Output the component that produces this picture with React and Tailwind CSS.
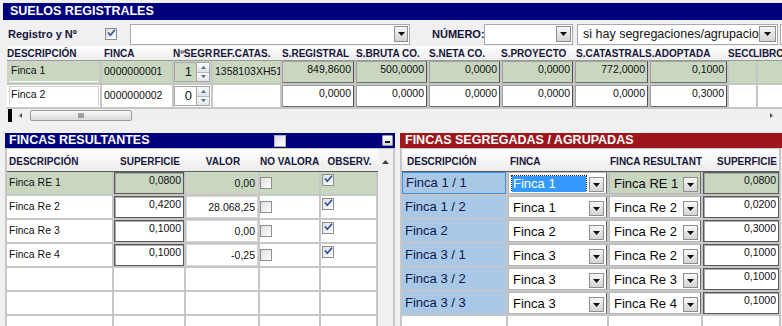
import React from 'react';

const G = 'bg-[#c9d7c1]';
const TITLE = 'text-[12.5px] font-bold text-white';

function Check({ on, className = '' }) {
  return (
    <span
      className={`flex h-[12px] w-[12px] shrink-0 items-start justify-center border border-[#8e8f8f] bg-gradient-to-br from-[#dcdcdc] to-white ${className}`}
    >
      {on && (
        <svg width="9" height="8" viewBox="0 0 9 8">
          <path d="M1 3.5l2.3 2.8L8 0.8" fill="none" stroke="#2b4f9e" strokeWidth="1.6" />
        </svg>
      )}
    </span>
  );
}

function Arrow() {
  return (
    <svg width="7" height="4" viewBox="0 0 7 4">
      <path d="M0 0h7L3.5 4z" fill="#111" />
    </svg>
  );
}

function DropBtn({ className = '' }) {
  return (
    <span
      className={`flex shrink-0 items-center justify-center border border-[#8f8f8f] bg-gradient-to-b from-[#f7f7f7] to-[#d4d4d4] ${className}`}
    >
      <Arrow />
    </span>
  );
}

const topHead = [
  ['DESCRIPCIÓN', 'w-[95px]'],
  ['FINCA', 'w-[71px] pl-[2px]'],
  ['NºSEGR', 'w-[40px]'],
  ['REF.CATAS.', 'w-[69px]'],
  ['S.REGISTRAL', 'w-[74px]'],
  ['S.BRUTA CO.', 'w-[73px]'],
  ['S.NETA CO.', 'w-[72px]'],
  ['S.PROYECTO', 'w-[75px]'],
  ['S.CATASTRAL', 'w-[69px]'],
  ['S.ADOPTADA', 'w-[83px]'],
  ['SECC', 'w-[25px]'],
  ['LIBRO', 'w-[50px]'],
];

const valW = ['w-[72px]', 'w-[71px]', 'w-[71px]', 'w-[71px]', 'w-[73px]', 'w-[77px]'];

const topRows = [
  { d: 'Finca 1', f: '0000000001', n: '1', r: '1358103XH51', v: ['849,8600', '500,0000', '0,0000', '0,0000', '772,0000', '0,1000'], g: true },
  { d: 'Finca 2', f: '0000000002', n: '0', r: '', v: ['0,0000', '0,0000', '0,0000', '0,0000', '0,0000', '0,3000'], g: false },
];

const leftRows = [
  { d: 'Finca RE 1', s: '0,0800', v: '0,00', g: true },
  { d: 'Finca Re 2', s: '0,4200', v: '28.068,25' },
  { d: 'Finca Re 3', s: '0,1000', v: '0,00' },
  { d: 'Finca Re 4', s: '0,1000', v: '-0,25' },
  null,
  null,
  null,
];

const rightRows = [
  { d: 'Finca 1 / 1', f: 'Finca 1', r: 'Finca RE 1', s: '0,0800', g: true },
  { d: 'Finca 1 / 2', f: 'Finca 1', r: 'Finca Re 2', s: '0,0200' },
  { d: 'Finca 2', f: 'Finca 2', r: 'Finca Re 2', s: '0,3000' },
  { d: 'Finca 3 / 1', f: 'Finca 3', r: 'Finca Re 2', s: '0,1000' },
  { d: 'Finca 3 / 2', f: 'Finca 3', r: 'Finca Re 3', s: '0,1000' },
  { d: 'Finca 3 / 3', f: 'Finca 3', r: 'Finca Re 4', s: '0,1000' },
  null,
];

function TopTable() {
  return (
    <div className="ml-[7px] w-[775px] overflow-hidden">
      {/* header */}
      <div className="flex h-[15px] items-center border-b border-[#9a9a9a] bg-gradient-to-b from-white to-[#ececec] text-[10px] font-bold text-[#16163a]">
        {topHead.map(([t, w]) => (
          <div key={t} className={`${w} shrink-0 overflow-hidden whitespace-nowrap`}>
            {t}
          </div>
        ))}
      </div>
      {topRows.map((row) => (
        <div key={row.d} className="flex gap-[2px] bg-[#c6c6c6] pb-[2px]">
          <div className={`h-[22px] w-[93px] shrink-0 pl-[2px] pr-[1px] pt-[1px] ${row.g ? G : 'bg-white'}`}>
            <div className={`h-[20px] border border-[#d0d0d0] border-b-white pl-[1px] text-[10.5px] leading-[14px] ${row.g ? G : 'bg-white'}`}>
              {row.d}
            </div>
          </div>
          <div className={`flex h-[22px] w-[70px] shrink-0 items-center pl-[2px] text-[10.5px] ${row.g ? G : 'bg-white'}`}>
            {row.f}
          </div>
          <div className={`flex h-[22px] w-[37px] shrink-0 items-center ${row.g ? G : 'bg-white'}`}>
            <div className="flex h-[20px] w-[22px] items-center justify-end border border-[#a8a8a8] border-r-0 pr-[4px] text-[13px]">
              {row.n}
            </div>
            <div className="flex h-[20px] w-[14px] flex-col border border-[#a8a8a8]">
              <span className="flex flex-1 items-center justify-center border-b border-[#b8b8b8] bg-gradient-to-b from-[#fafafa] to-[#dfe3e8]">
                <svg width="5" height="3" viewBox="0 0 5 3"><path d="M0 3h5L2.5 0z" fill="#4b6a98" /></svg>
              </span>
              <span className="flex flex-1 items-center justify-center bg-gradient-to-b from-[#fafafa] to-[#dfe3e8]">
                <svg width="5" height="3" viewBox="0 0 5 3"><path d="M0 0h5L2.5 3z" fill="#4b6a98" /></svg>
              </span>
            </div>
          </div>
          <div className={`flex h-[22px] w-[67px] shrink-0 items-center overflow-hidden whitespace-nowrap pl-[2px] text-[10.5px] ${row.g ? G : 'bg-white'}`}>
            {row.r}
          </div>
          {row.v.map((v, i) => (
            <div
              key={i}
              className={`h-[22px] ${valW[i]} shrink-0 border border-[#a0a0a0] border-r-[#505050] border-b-[#707070] pr-[2px] text-right text-[10.5px] leading-[14px] ${row.g ? G : 'bg-white'}`}
            >
              {v}
            </div>
          ))}
          <div className={`h-[22px] w-[27px] shrink-0 ${row.g ? G : 'bg-white'}`} />
          <div className={`h-[22px] w-[42px] shrink-0 ${row.g ? G : 'bg-white'}`} />
        </div>
      ))}
    </div>
  );
}

function HScroll() {
  return (
    <div className="flex h-[13px] items-center bg-[#efefef]">
      <div className="ml-[8px] h-[13px] w-[4px] bg-black" />
      <div className="flex w-[16px] items-center justify-center">
        <svg width="3" height="5" viewBox="0 0 3 5"><path d="M3 0v5L0 2.5z" fill="#555" /></svg>
      </div>
      <div className="ml-[2px] flex h-[11px] w-[102px] items-center justify-center rounded-[2px] border border-[#9a9a9a] bg-gradient-to-b from-[#f9f9f9] to-[#dadada]">
        <span className="text-[7px] font-bold leading-none text-[#666]">III</span>
      </div>
      <div className="flex-1" />
      <div className="mr-[8px] flex w-[6px] items-center justify-center">
        <svg width="3" height="5" viewBox="0 0 3 5"><path d="M0 0v5L3 2.5z" fill="#555" /></svg>
      </div>
    </div>
  );
}

function LeftPanel() {
  return (
    <div className="flex h-[193px] w-[390px] shrink-0 flex-col">
      <div className="flex h-[15px] shrink-0 items-center bg-[#00007c]">
        <span className={`w-[269px] shrink-0 pl-[4px] leading-[15px] ${TITLE}`}>FINCAS RESULTANTES</span>
        <Check className="border-[#b0b0b0]" />
        <div className="flex-1" />
        <span className="mr-[2px] flex h-[11px] w-[11px] items-end justify-center rounded-[1px] border border-[#9a9a9a] bg-gradient-to-b from-white to-[#d8d8d8] pb-[2px]">
          <span className="h-[2px] w-[5px] bg-[#111]" />
        </span>
      </div>
      <div className="flex flex-1 border-t border-l-2 border-r-2 border-[#c6c6c6]">
        <div className="flex w-[371px] flex-col">
          <div className="flex h-[23px] shrink-0 items-center border-b border-[#5c5c5c] bg-gradient-to-b from-white to-[#ececec] pt-[2px] text-[10px] font-bold text-[#16163a]">
            <div className="w-[107px] pl-[2px]">DESCRIPCIÓN</div>
            <div className="w-[72px] text-center">SUPERFICIE</div>
            <div className="w-[74px] text-center">VALOR</div>
            <div className="w-[61px] overflow-hidden whitespace-nowrap">NO VALORA</div>
            <div className="w-[57px] text-center">OBSERV.</div>
          </div>
          {leftRows.map((row, i) => (
            <div key={i} className="flex gap-[2px] bg-[#c6c6c6] pb-[2px] pr-[2px]">
              <div className={`flex h-[22px] w-[105px] shrink-0 items-center pl-[2px] text-[10.5px] ${row && row.g ? G : 'bg-white'}`}>
                {row && row.d}
              </div>
              <div className={`h-[22px] w-[70px] shrink-0 ${row && row.g ? G : 'bg-white'}`}>
                {row && (
                  <div className="h-full border border-[#5a5a5a] pr-[2px] text-right text-[10.5px] leading-[14px] shadow-[inset_1px_1px_0_#a8a8a8]">
                    {row.s}
                  </div>
                )}
              </div>
              <div className={`h-[22px] w-[72px] shrink-0 ${row && row.g ? G : 'bg-white'}`}>
                {row && (
                  <div className="flex h-full items-center justify-end border border-[#d6d6d6] pr-[2px] pt-[2px] text-[10.5px]">
                    {row.v}
                  </div>
                )}
              </div>
              <div className={`flex h-[22px] w-[59px] shrink-0 items-center ${row && row.g ? G : 'bg-white'}`}>
                {row && <Check />}
              </div>
              <div className={`h-[22px] w-[55px] shrink-0 pl-[1px] pt-[2px] ${row && row.g ? G : 'bg-white'}`}>
                {row && <Check on />}
              </div>
            </div>
          ))}
        </div>
        <div className="flex w-[15px] flex-col bg-[#f0f0f0]">
          <div className="flex h-[23px] items-center justify-center pt-[3px]">
            <svg width="7" height="4" viewBox="0 0 7 4"><path d="M0 4h7L3.5 0z" fill="#444" /></svg>
          </div>
        </div>
      </div>
    </div>
  );
}

function Combo({ text, green, focus }) {
  return (
    <div className={`flex h-[22px] items-center border border-[#b9b9b9] border-r-[#6a6a6a] ${green ? G : 'bg-white'}`}>
      <div className="flex-1 overflow-hidden whitespace-nowrap pl-[3px] pt-[1px] text-[13px] leading-[16px] text-[#0a0a0a]">
        {focus ? (
          <span className="inline-block w-[74px] bg-[#3399ff] pl-[1px] text-white outline-1 outline-dotted outline-[#1a1a1a]">
            {text}
          </span>
        ) : (
          <span className="pl-[1px]">{text}</span>
        )}
      </div>
      <DropBtn className="mr-[2px] mt-[3px] h-[15px] w-[15px]" />
    </div>
  );
}

function RightPanel() {
  return (
    <div className="ml-[5px] flex h-[193px] w-[382px] shrink-0 flex-col">
      <div className={`flex h-[15px] shrink-0 items-center bg-[#9e161c] pl-[5px] leading-[15px] ${TITLE}`}>
        FINCAS SEGREGADAS / AGRUPADAS
      </div>
      <div className="w-[381px] flex-1 border-t border-l-2 border-r-2 border-[#c6c6c6]">
        <div className="flex h-[23px] items-center border-b border-[#5c5c5c] bg-gradient-to-b from-white to-[#ececec] pt-[2px] text-[10px] font-bold text-[#16163a]">
          <div className="w-[106px] shrink-0 pl-[5px]">DESCRIPCIÓN</div>
          <div className="w-[101px] shrink-0 pl-[2px]">FINCA</div>
          <div className="w-[93px] shrink-0 overflow-hidden whitespace-nowrap pl-[1px]">FINCA RESULTANTE</div>
          <div className="w-[77px] shrink-0 pr-[2px] text-right">SUPERFICIE</div>
        </div>
        {rightRows.map((row, i) => (
          <div key={i} className="flex gap-[2px] bg-[#c6c6c6] pb-[2px]">
            <div
              className={`flex h-[22px] w-[104px] shrink-0 items-center pl-[3px] text-[13px] text-[#0b1650] ${row ? 'bg-[#a8c8e6]' : 'bg-white'} ${i === 0 ? 'border border-[#3d8ee8]' : ''}`}
            >
              {row && row.d}
            </div>
            <div className="h-[22px] w-[99px] shrink-0 bg-white">{row && <Combo text={row.f} focus={i === 0} />}</div>
            <div className="h-[22px] w-[92px] shrink-0 bg-white">{row && <Combo text={row.r} green={row.g} />}</div>
            <div className={`h-[22px] w-[76px] shrink-0 ${row && row.g ? G : 'bg-white'}`}>
              {row && (
                <div className="h-full border border-[#5a5a5a] pr-[2px] text-right text-[10.5px] leading-[14px] shadow-[inset_1px_1px_0_#a8a8a8]">
                  {row.s}
                </div>
              )}
            </div>
          </div>
        ))}
      </div>
    </div>
  );
}

export default function App() {
  return (
    <div className="h-[326px] w-[782px] overflow-hidden bg-[#f0f0f0] font-['Liberation_Sans',Arial,sans-serif] text-[#111]">
      {/* Suelos registrales */}
      <div className={`ml-[3px] mt-[3px] h-[17px] bg-[#00007c] pl-[7px] leading-[17px] ${TITLE}`}>
        SUELOS REGISTRALES
      </div>
      <div className="mt-[2px] flex h-[24px] items-center">
        <span className="ml-[8px] w-[97px] shrink-0 text-[11px] font-bold text-[#14143a]">Registro y Nº</span>
        <Check on />
        <div className="ml-[13px] flex h-[21px] w-[280px] shrink-0 items-center justify-end border border-[#a9a9a9] bg-white pr-[1px]">
          <DropBtn className="h-[16px] w-[14px]" />
        </div>
        <span className="ml-[22px] w-[52px] shrink-0 text-[11px] font-bold text-[#14143a]">NÚMERO:</span>
        <div className="flex h-[21px] w-[89px] shrink-0 items-center justify-end border border-[#a9a9a9] bg-white pr-[1px]">
          <DropBtn className="h-[16px] w-[15px]" />
        </div>
        <div className="ml-[4px] flex h-[21px] w-[201px] shrink-0 items-center border border-[#a9a9a9] bg-white pr-[1px]">
          <span className="flex-1 overflow-hidden whitespace-nowrap pl-[5px] text-[12.5px]">
            si hay segregaciones/agrupaciones
          </span>
          <DropBtn className="h-[16px] w-[17px]" />
        </div>
        <div className="ml-[2px] h-[21px] w-[4px] shrink-0 border border-r-0 border-[#a9a9a9] bg-white" />
      </div>
      <TopTable />
      <HScroll />
      {/* Paneles inferiores */}
      <div className="ml-[5px] mt-[11px] flex">
        <LeftPanel />
        <RightPanel />
      </div>
    </div>
  );
}
